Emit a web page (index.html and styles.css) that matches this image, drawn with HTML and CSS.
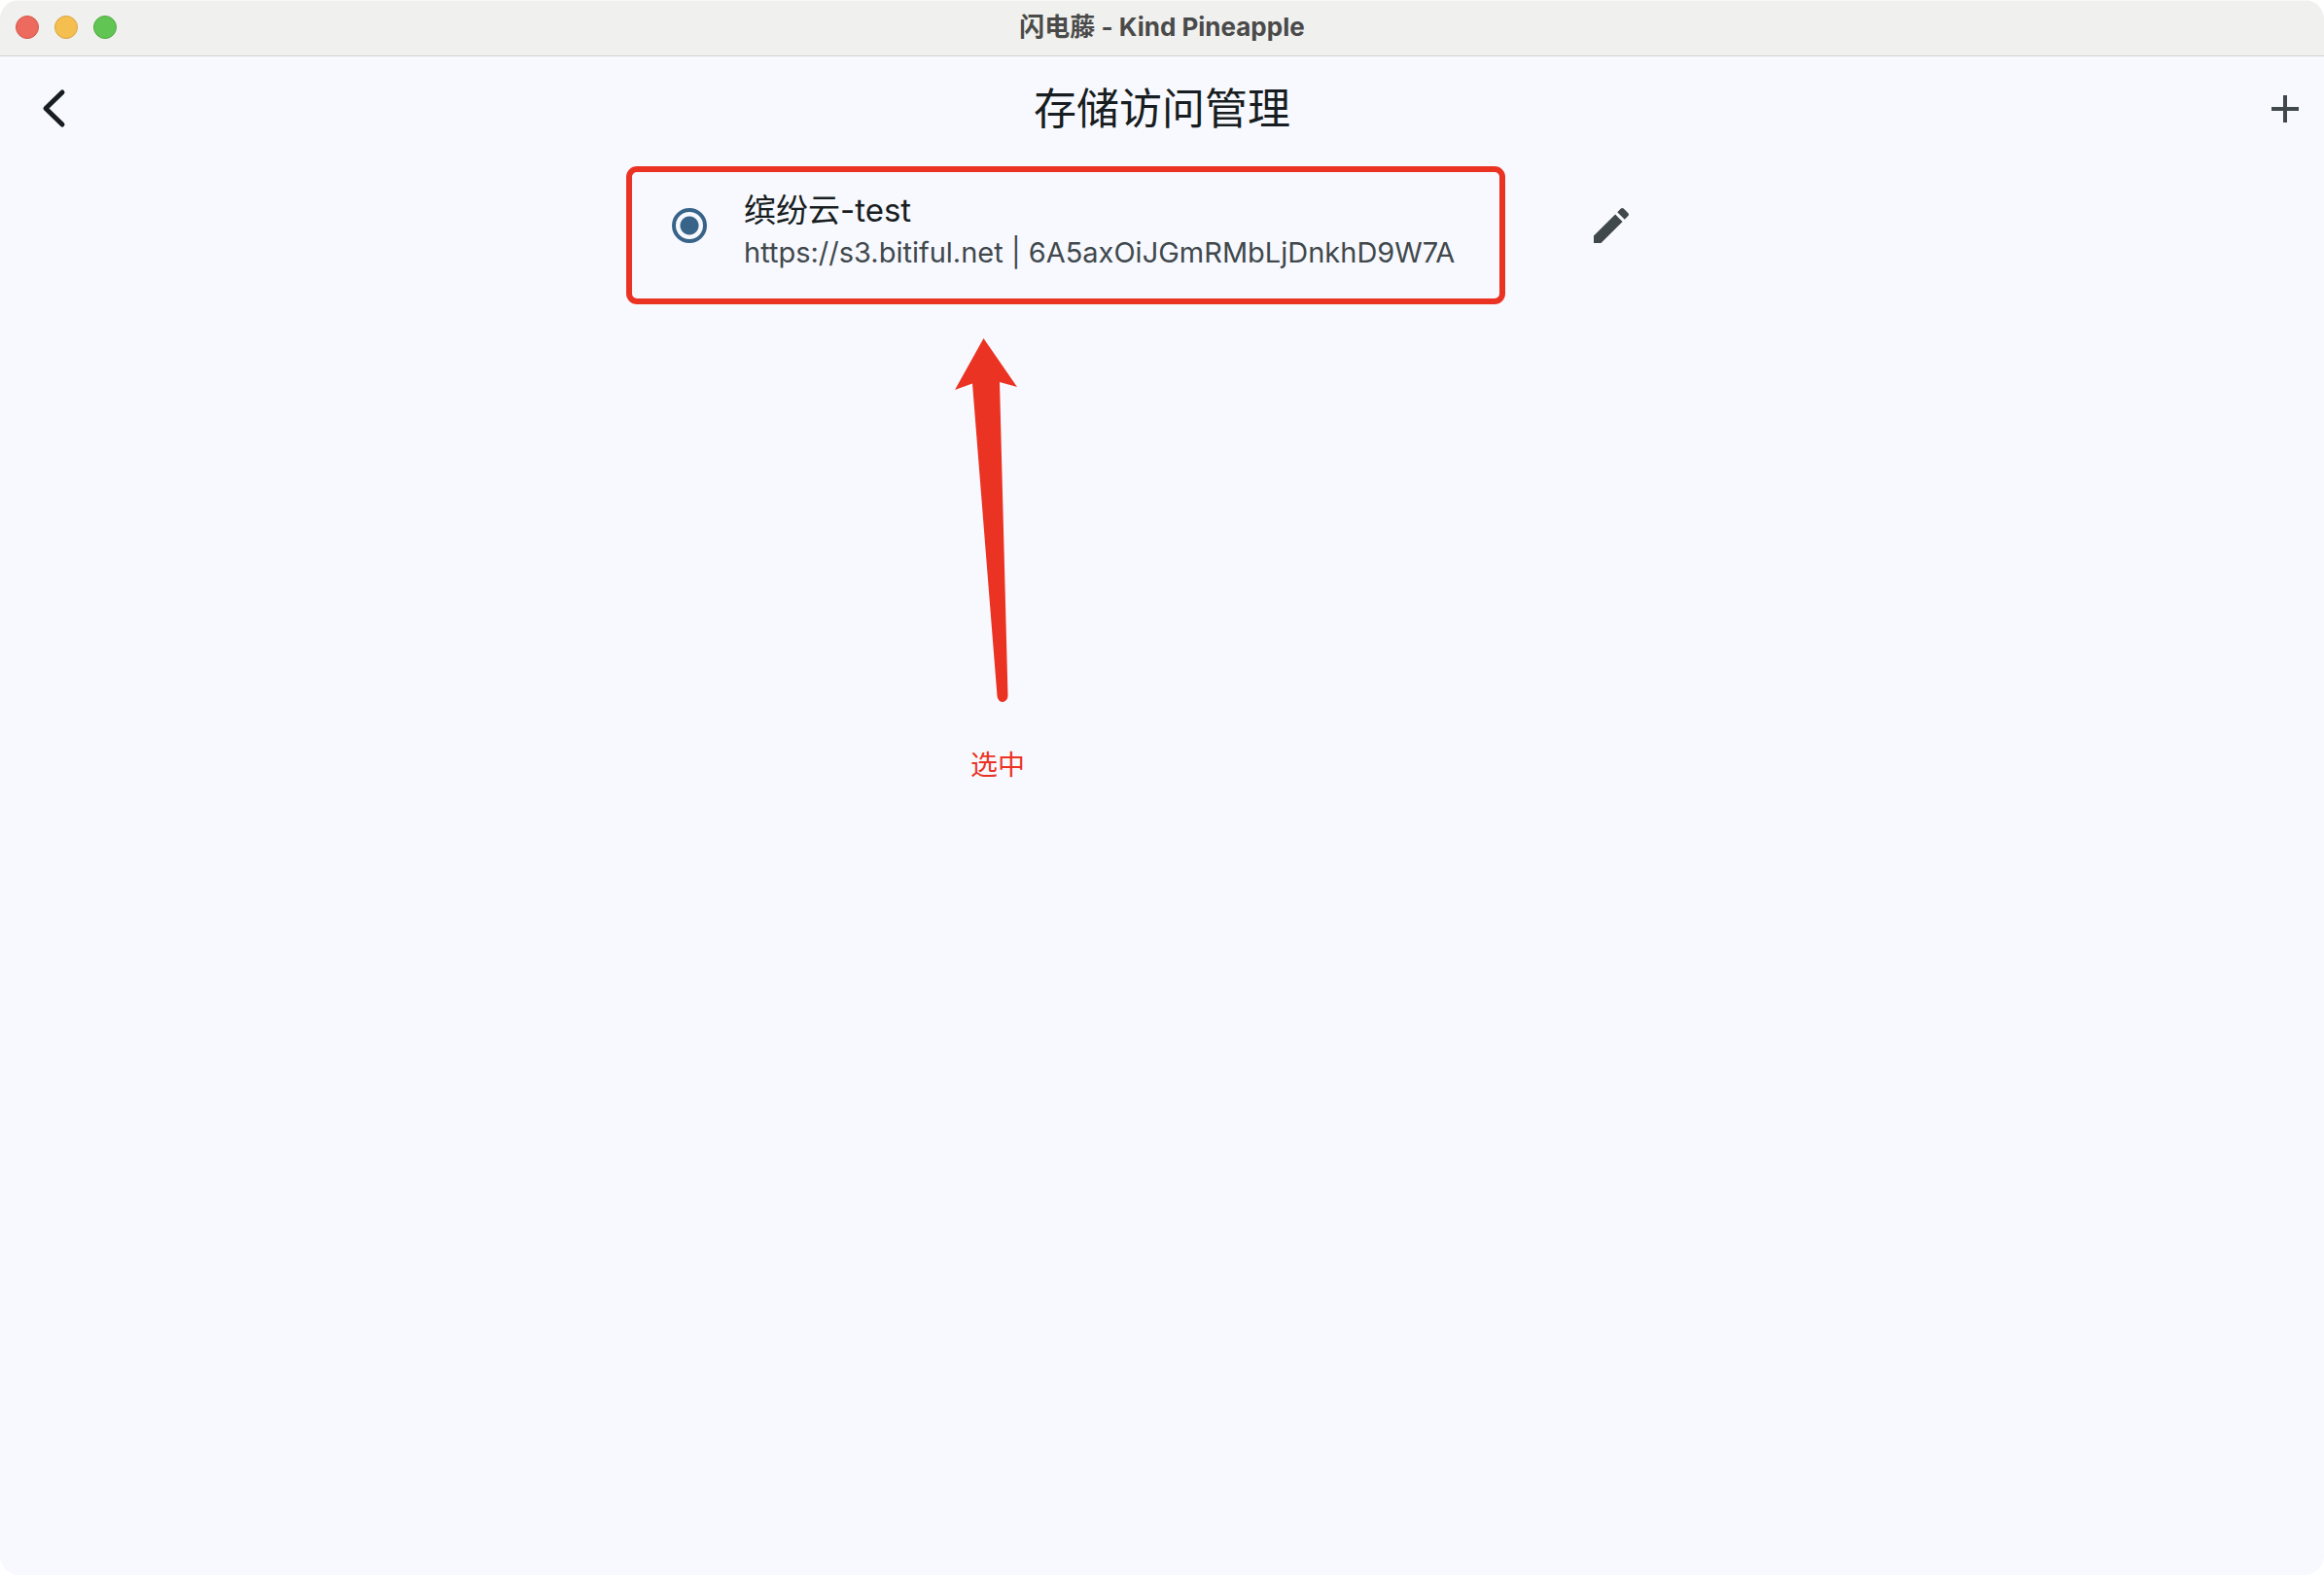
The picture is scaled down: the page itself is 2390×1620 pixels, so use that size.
FILE: index.html
```html
<!DOCTYPE html>
<html lang="zh-CN">
<head>
  <meta charset="UTF-8">
  <meta name="viewport" content="width=device-width, initial-scale=1">
  <title>闪电藤 - Kind Pineapple</title>
  <link rel="stylesheet" href="styles.css">
</head>
<body>
  <div class="window">
    <!-- 窗口标题栏 -->
    <header class="titlebar">
      <div class="window-controls">
        <button class="dot dot-close" aria-label="关闭"></button>
        <button class="dot dot-min" aria-label="最小化"></button>
        <button class="dot dot-max" aria-label="最大化"></button>
      </div>
      <span class="window-title">闪电藤 - Kind Pineapple</span>
    </header>

    <!-- 页面导航 -->
    <nav class="appbar">
      <button class="icon-btn" aria-label="返回">
        <svg width="48" height="48" viewBox="0 0 48 48">
          <path d="M32 7 15 23.500l17 16.500" fill="none" stroke="#171d20" stroke-width="5" stroke-linecap="round" stroke-linejoin="round"/>
        </svg>
      </button>
      <h1>存储访问管理</h1>
      <button class="icon-btn" aria-label="添加">
        <svg width="48" height="48" viewBox="0 0 24 24">
          <path d="M19 13h-6v6h-2v-6H5v-2h6V5h2v6h6v2z" fill="#40484c"/>
        </svg>
      </button>
    </nav>

    <main class="storage-list">
      <div class="storage-item">
        <input type="radio" name="storage" id="bitiful" checked>
        <label for="bitiful">
          <span class="name">缤纷云-test</span>
          <span class="detail">https://s3.bitiful.net | 6A5axOiJGmRMbLjDnkhD9W7A</span>
        </label>
        <button class="icon-btn" aria-label="编辑">
          <svg width="48" height="48" viewBox="0 0 24 24">
            <path d="M3 17.25V21h3.75L17.81 9.94l-3.75-3.75L3 17.25zM20.71 7.04c.39-.39.39-1.02 0-1.41l-2.34-2.34c-.39-.39-1.02-.39-1.41 0l-1.83 1.83 3.75 3.75 1.83-1.83z" fill="#40484c"/>
          </svg>
        </button>
        <div class="highlight"></div>
      </div>

      <!-- 操作提示 -->
      <figure class="callout">
        <svg width="66" height="376" viewBox="0 0 66 376">
          <path d="M29.500 0 64 50 46 45 54.500 367a5 6 0 0 1-11 1L18 46.500 0 53z" fill="#eb3323"/>
        </svg>
        <figcaption>选中</figcaption>
      </figure>
    </main>
  </div>
</body>
</html>
```

FILE: styles.css
```css
* {
  margin: 0;
  padding: 0;
  box-sizing: border-box;
}
body {
  background: #fff;
  font-family: Inter, "Noto Sans CJK SC", sans-serif;
  color: #171d20;
}
button {
  border: none;
  background: none;
  cursor: pointer;
}
.window {
  min-height: 100vh;
  background: #f8f9ff;
  border-radius: 20px;
  overflow: hidden;
}

/* 标题栏 */
.titlebar {
  display: grid;
  grid-template-columns: 1fr auto 1fr;
  align-items: center;
  height: 58px;
  padding: 0 16px 2px;
  background: #f0f0ee;
  border-top: 1px solid #f8f8f7;
  border-bottom: 1px solid #d2d1d8;
}
.window-controls {
  display: flex;
  gap: 16px;
}
.dot {
  width: 24px;
  height: 24px;
  border-radius: 50%;
}
.dot-close {
  background: #ec6a5e;
  border: 1px solid #d5564b;
}
.dot-min {
  background: #f4bf4f;
  border: 1px solid #d8a243;
}
.dot-max {
  background: #61c554;
  border: 1px solid #51a73e;
}
.window-title {
  font-size: 26px;
  line-height: 32px;
  font-weight: 700;
  color: #4a4a4a;
}

/* 导航 */
.appbar {
  display: grid;
  grid-template-columns: 1fr auto 1fr;
  align-items: center;
  height: 108px;
  margin-bottom: 2px;
}
.appbar h1 {
  font-size: 44px;
  line-height: 56px;
  font-weight: 400;
}
.icon-btn {
  display: flex;
  align-items: center;
  justify-content: center;
  width: 80px;
  height: 80px;
}
.appbar .icon-btn:first-child {
  width: 112px;
}
.appbar .icon-btn:last-child {
  justify-self: end;
}

/* 列表 */
.storage-list {
  max-width: 1100px;
  margin: 0 auto;
}
.storage-item {
  position: relative;
  display: flex;
  align-items: center;
  height: 128px;
  padding: 0 48px 0 46px;
}
.storage-item input {
  appearance: none;
  width: 36px;
  height: 36px;
  border: 4px solid #38648a;
  border-radius: 50%;
  background: radial-gradient(circle, #38648a 9px, transparent 10px);
}
.storage-item label {
  display: flex;
  flex: 1;
  flex-direction: column;
  margin-left: 38px;
  padding-top: 8px;
}
.name {
  font-size: 33px;
  line-height: 48px;
}
.detail {
  font-size: 29px;
  line-height: 40px;
  color: #40484c;
}
.highlight {
  position: absolute;
  top: 3px;
  left: -1px;
  width: 904px;
  height: 142px;
  border: 6px solid #eb3323;
  border-radius: 11px;
  pointer-events: none;
}

/* 提示箭头 */
.callout {
  width: 92px;
  margin: 52px 0 0 337px;
}
.callout svg {
  display: block;
}
.callout figcaption {
  margin-top: 43px;
  padding-left: 16px;
  font-size: 28px;
  line-height: 40px;
  color: #eb3323;
}
```
